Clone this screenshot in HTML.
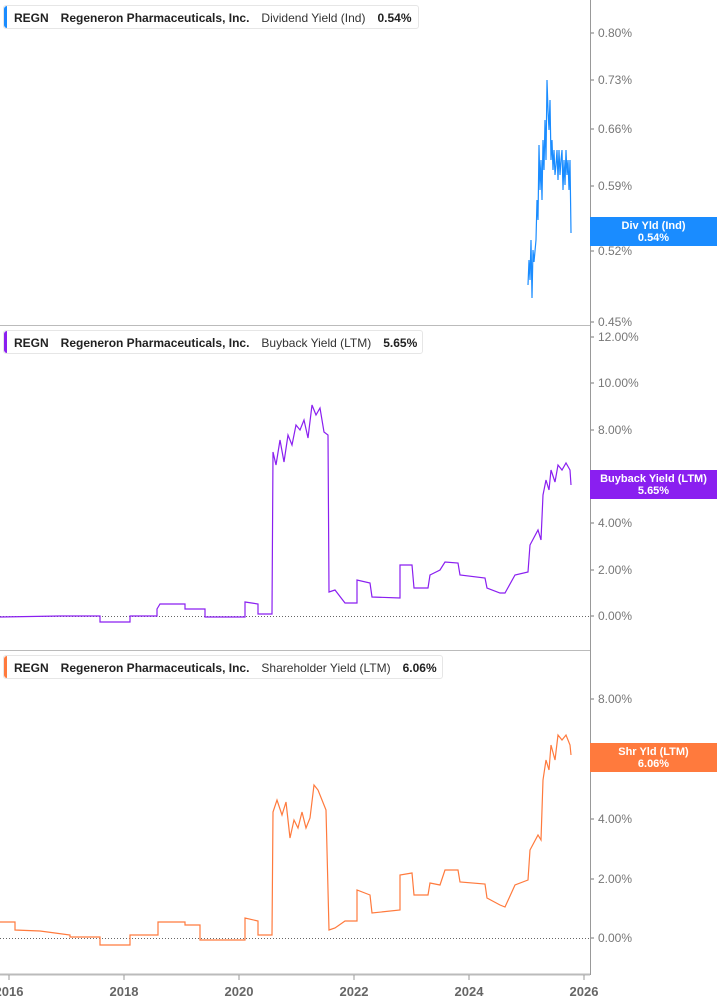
<!DOCTYPE html>
<html><head><meta charset="utf-8"><style>
body{margin:0;width:717px;height:1005px;background:#fff;overflow:hidden;font-family:"Liberation Sans",sans-serif}
.hdr{position:absolute;left:3px;height:24px;background:#fff;border:1px solid #e6e6e6;border-radius:3px;font-size:12px;font-weight:bold;color:#222;line-height:24px;padding-left:10px;box-sizing:border-box;white-space:nowrap}
.hdr:before{content:"";position:absolute;left:0;top:0;bottom:0;width:3px;border-radius:3px 0 0 3px;background:var(--c)}
.hdr span{margin-right:12px}
.hdr .n{font-weight:normal;color:#333}
.lab{position:absolute;left:590px;width:127px;color:#fff;font-size:11px;font-weight:bold;text-align:center;line-height:12px;padding-top:3px;box-sizing:border-box}
</style></head><body>
<svg width="717" height="1005" style="position:absolute;left:0;top:0" font-family="Liberation Sans, sans-serif" font-size="12" fill="#555">
<line x1="590.5" y1="0" x2="590.5" y2="975" stroke="#999"/>
<line x1="0" y1="974.5" x2="590" y2="974.5" stroke="#bbb" stroke-width="2"/>
<line x1="0" y1="325.5" x2="590" y2="325.5" stroke="#bbb"/>
<line x1="0" y1="650.5" x2="590" y2="650.5" stroke="#bbb"/>
<g stroke="#999"><line x1="9" y1="975" x2="9" y2="980"/><line x1="124" y1="975" x2="124" y2="980"/><line x1="239" y1="975" x2="239" y2="980"/><line x1="354" y1="975" x2="354" y2="980"/><line x1="469" y1="975" x2="469" y2="980"/><line x1="584" y1="975" x2="584" y2="980"/></g>
<g stroke="#777"><line x1="591" y1="33" x2="594" y2="33"/><line x1="591" y1="80" x2="594" y2="80"/><line x1="591" y1="129" x2="594" y2="129"/><line x1="591" y1="186" x2="594" y2="186"/><line x1="591" y1="251" x2="594" y2="251"/><line x1="591" y1="322" x2="594" y2="322"/><line x1="591" y1="337" x2="594" y2="337"/><line x1="591" y1="383" x2="594" y2="383"/><line x1="591" y1="430" x2="594" y2="430"/><line x1="591" y1="476" x2="594" y2="476"/><line x1="591" y1="523" x2="594" y2="523"/><line x1="591" y1="570" x2="594" y2="570"/><line x1="591" y1="616" x2="594" y2="616"/><line x1="591" y1="699" x2="594" y2="699"/><line x1="591" y1="759" x2="594" y2="759"/><line x1="591" y1="819" x2="594" y2="819"/><line x1="591" y1="879" x2="594" y2="879"/><line x1="591" y1="938" x2="594" y2="938"/></g>
<g font-weight="bold" font-size="13" fill="#666" text-anchor="middle"><text x="9" y="996">2016</text><text x="124" y="996">2018</text><text x="239" y="996">2020</text><text x="354" y="996">2022</text><text x="469" y="996">2024</text><text x="584" y="996">2026</text></g>
<g fill="#777"><text x="598" y="37">0.80%</text><text x="598" y="84">0.73%</text><text x="598" y="133">0.66%</text><text x="598" y="190">0.59%</text><text x="598" y="255">0.52%</text><text x="598" y="326">0.45%</text>
<text x="598" y="341">12.00%</text><text x="598" y="387">10.00%</text><text x="598" y="434">8.00%</text><text x="598" y="480">6.00%</text><text x="598" y="527">4.00%</text><text x="598" y="574">2.00%</text><text x="598" y="620">0.00%</text>
<text x="598" y="703">8.00%</text><text x="598" y="763">6.00%</text><text x="598" y="823">4.00%</text><text x="598" y="883">2.00%</text><text x="598" y="942">0.00%</text></g>
<line x1="0" y1="616.5" x2="590" y2="616.5" stroke="#666" stroke-dasharray="1,2"/>
<line x1="0" y1="938.5" x2="590" y2="938.5" stroke="#666" stroke-dasharray="1,2"/>
<polyline fill="none" stroke="#1a8cff" stroke-width="1.2" points="528,285 529,260 530,280 531,240 532,298 533,250 534,262 536,240 537,200 538,220 539,145 540,190 541,160 542,200 543,140 544,170 545,120 546,160 547,80 548,110 549,130 550,100 551,160 552,140 553,170 554,150 555,175 556,165 557,150 558,180 559,150 560,175 561,160 562,150 563,190 564,160 565,185 566,150 567,175 568,160 569,190 570,160 571,233"/>
<polyline fill="none" stroke="#8a1ff0" stroke-width="1.2" points="0,617 60,616 100,616 100,622 130,622 130,616 157,616 157,609 160,604 185,604 185,609 205,609 205,617 245,617 245,602 258,604 258,614 272,614 273,452 276,465 280,440 284,462 288,435 292,445 296,425 300,430 304,420 308,438 312,405 316,415 320,408 324,432 328,435 329,592 335,590 345,603 357,603 357,580 370,583 372,597 400,598 400,565 412,565 414,588 428,588 430,575 440,570 445,562 458,563 460,575 485,578 487,588 500,593 505,593 515,575 528,572 530,545 538,530 541,540 543,495 546,480 549,490 551,470 555,482 558,465 562,470 566,463 570,470 571,485"/>
<polyline fill="none" stroke="#ff7a3d" stroke-width="1.2" points="0,922 15,922 15,930 40,931 55,933 70,935 70,937 100,937 100,945 130,945 130,935 158,935 158,922 185,922 185,925 200,925 200,940 245,940 245,918 258,921 258,935 272,935 273,812 277,800 282,815 286,802 290,838 294,820 298,828 302,812 306,828 310,818 314,785 318,790 322,800 326,810 329,930 335,928 345,921 357,921 357,890 370,895 372,913 400,910 400,875 412,873 414,895 428,895 430,883 440,885 445,870 458,870 460,882 485,884 487,898 500,905 505,907 515,885 528,880 530,850 538,835 541,840 543,780 546,760 549,770 551,745 555,760 558,735 562,740 566,735 570,745 571,755"/>
</svg>
<div class="hdr" style="--c:#1a8cff;top:5px;width:416px"><span>REGN</span><span>Regeneron Pharmaceuticals, Inc.</span><span class="n">Dividend Yield (Ind)</span><span>0.54%</span></div>
<div class="hdr" style="--c:#8a1ff0;top:330px;width:420px"><span>REGN</span><span>Regeneron Pharmaceuticals, Inc.</span><span class="n">Buyback Yield (LTM)</span><span>5.65%</span></div>
<div class="hdr" style="--c:#ff7a3d;top:655px;width:440px"><span>REGN</span><span>Regeneron Pharmaceuticals, Inc.</span><span class="n">Shareholder Yield (LTM)</span><span>6.06%</span></div>
<div class="lab" style="top:217px;height:29px;background:#1a8cff">Div Yld (Ind)<br>0.54%</div>
<div class="lab" style="top:470px;height:29px;background:#8a1ff0">Buyback Yield (LTM)<br>5.65%</div>
<div class="lab" style="top:743px;height:29px;background:#ff7a3d">Shr Yld (LTM)<br>6.06%</div>
</body></html>
